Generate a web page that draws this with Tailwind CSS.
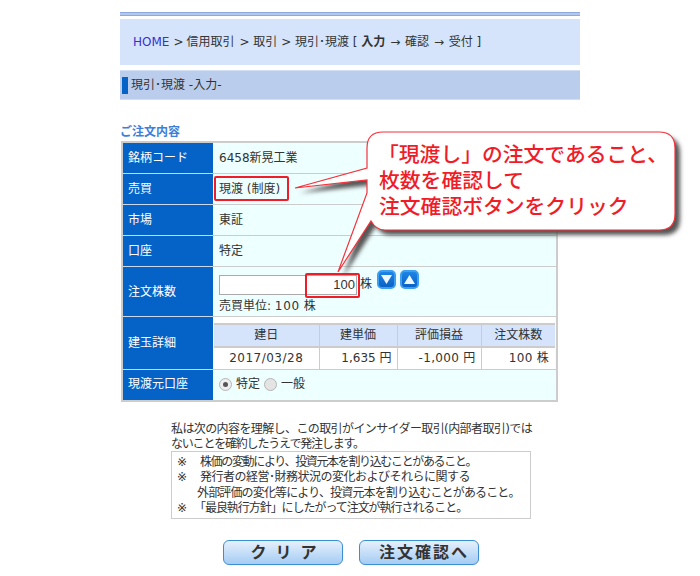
<!DOCTYPE html>
<html lang="ja">
<head>
  <meta charset="UTF-8">
  <title>現引・現渡 -入力-</title>
  <script src="https://cdn.jsdelivr.net/npm/@tailwindcss/browser@4"></script>
</head>
<body class="bg-white font-['DejaVu_Sans','Noto_Sans_CJK_JP',sans-serif] text-[12px] leading-[15px] text-[#333]">
  <div class="relative w-[700px] h-[576px] overflow-hidden">
    <div class="w-[460px] mx-auto pt-[12px]">
      <!-- top rule -->
      <div class="h-[4px] bg-[#b3c8ec] border-y border-[#8eaadc]"></div>

      <!-- breadcrumb -->
      <div class="mt-[3px] h-[46px] bg-[#d5e4fb] pl-[13px] flex items-center whitespace-nowrap">
        <span class="text-[#3333cc]">HOME</span>
        <span class="ml-[4px]">&gt;</span>
        <span class="ml-[3px]">信用取引</span>
        <span class="ml-[5px]">&gt; 取引 &gt; 現引･現渡 [ <b>入力</b> <span class="mx-[1px]">→</span> 確認 <span class="mx-[1px]">→</span> 受付 ]</span>
      </div>

      <!-- page heading -->
      <div class="mt-[5px] h-[30px] bg-[#bbcdec] border-y border-[#d3dff2] flex items-center pl-[2px]">
        <div class="w-[6px] h-[17px] bg-[#0563c8]"></div>
        <span class="ml-[3px]">現引･現渡 -入力-</span>
      </div>

      <h2 class="mt-[25px] h-[15px] font-bold text-[#3d7fd9]">ご注文内容</h2>

      <!-- order table -->
      <table class="ml-[1px] mt-[1px] w-[437px] border-collapse border-2 border-[#cccccc] bg-[#eeffff] table-fixed">
        <colgroup><col class="w-[91px]"><col></colgroup>
        <tbody>
          <tr class="h-[31px] border-b border-[#cccccc]">
            <th class="bg-[#0563c8] text-white font-normal text-left pl-[5px] pt-[2px] border-b border-[#c9d9ee]">銘柄コード</th>
            <td class="pl-[6px] pt-[2px]">6458新晃工業</td>
          </tr>
          <tr class="h-[31px] border-b border-[#cccccc]">
            <th class="bg-[#0563c8] text-white font-normal text-left pl-[5px] pt-[2px] border-b border-[#c9d9ee]">売買</th>
            <td class="pl-[6px] pt-[2px]">現渡 (制度)</td>
          </tr>
          <tr class="h-[31px] border-b border-[#cccccc]">
            <th class="bg-[#0563c8] text-white font-normal text-left pl-[5px] pt-[2px] border-b border-[#c9d9ee]">市場</th>
            <td class="pl-[6px] pt-[2px]">東証</td>
          </tr>
          <tr class="h-[31px] border-b border-[#cccccc]">
            <th class="bg-[#0563c8] text-white font-normal text-left pl-[5px] pt-[2px] border-b border-[#c9d9ee]">口座</th>
            <td class="pl-[6px] pt-[2px]">特定</td>
          </tr>
          <tr class="h-[50px] border-b border-[#cccccc]">
            <th class="bg-[#0563c8] text-white font-normal text-left pl-[5px] pt-[2px] border-b border-[#c9d9ee]">注文株数</th>
            <td class="pl-[6px] align-top">
              <div class="flex items-start mt-[3px] h-[25px]">
                <div class="mt-[5px] w-[138px] h-[20px] border border-[#aaaaaa] bg-white text-right pr-[1px] leading-[18px] font-['Liberation_Sans',sans-serif] text-[13px]">100</div>
                <span class="ml-[3px] mt-[7px]">株</span>
                <!-- spin buttons -->
                <button class="ml-[5px] w-[19px] h-[19px] rounded-[5px] border-2 border-[#3c9ff0] bg-gradient-to-b from-[#1d84e6] to-[#0a62c4] flex items-center justify-center">
                  <svg width="11" height="9" viewBox="0 0 11 9"><path d="M0 0H11L5.5 9Z" fill="#eef6ff"/></svg>
                </button>
                <button class="ml-[4px] w-[19px] h-[19px] rounded-[5px] border-2 border-[#3c9ff0] bg-gradient-to-b from-[#1d84e6] to-[#0a62c4] flex items-center justify-center">
                  <svg width="11" height="9" viewBox="0 0 11 9"><path d="M0 9H11L5.5 0Z" fill="#eef6ff"/></svg>
                </button>
              </div>
              <div class="mt-[4px]">売買単位: <span class="tracking-[0.7px]">100</span> 株</div>
            </td>
          </tr>
          <tr class="h-[53px] border-b border-[#cccccc]">
            <th class="bg-[#0563c8] text-white font-normal text-left pl-[5px] pt-[2px] border-b border-[#c9d9ee]">建玉詳細</th>
            <td class="p-0 align-top">
              <div class="ml-[1px] mr-[1px] pt-[6px] bg-white">
                <table class="w-full table-fixed border-collapse bg-white">
                  <colgroup><col class="w-[105px]"><col class="w-[78px]"><col class="w-[84px]"><col></colgroup>
                  <thead>
                    <tr class="h-[23px] bg-[#d5e4fb] border-y-2 border-[#cccccc]">
                      <th class="font-normal pt-[1px] border-r border-[#cccccc]">建日</th>
                      <th class="font-normal pt-[1px] border-r border-[#cccccc]">建単価</th>
                      <th class="font-normal pt-[1px] border-r border-[#cccccc]">評価損益</th>
                      <th class="font-normal pt-[1px]">注文株数</th>
                    </tr>
                  </thead>
                  <tbody>
                    <tr class="h-[22px]">
                      <td class="text-center tracking-[0.5px] border-r border-[#cccccc]">2017/03/28</td>
                      <td class="text-right pr-[5px] border-r border-[#cccccc]">1,635 円</td>
                      <td class="text-right pr-[5px] tracking-[0.3px] border-r border-[#cccccc]">-1,000 円</td>
                      <td class="text-right pr-[6px] tracking-[0.3px]">100 株</td>
                    </tr>
                  </tbody>
                </table>
              </div>
            </td>
          </tr>
          <tr class="h-[32px]">
            <th class="bg-[#0563c8] text-white font-normal text-left pl-[5px]">現渡元口座</th>
            <td class="pl-[6px]">
              <div class="flex items-center">
                <span class="w-[13px] h-[13px] rounded-full border border-[#b5b5b5] bg-[#eeeeee] flex items-center justify-center"><span class="w-[5px] h-[5px] rounded-full bg-[#555555]"></span></span>
                <span class="ml-[4px]">特定</span>
                <span class="ml-[4px] w-[13px] h-[13px] rounded-full border border-[#b5b5b5] bg-[#e4e4e4]"></span>
                <span class="ml-[4px]">一般</span>
              </div>
            </td>
          </tr>
        </tbody>
      </table>

      <!-- insider notice -->
      <div class="ml-[51px] mt-[20px] w-[362px] whitespace-nowrap">
        <p class="leading-[15px] tracking-[-0.6px]">私は次の内容を理解し、この取引がインサイダー取引(内部者取引)では</p>
        <p class="leading-[15px] tracking-[-1.2px]">ないことを確約したうえで発注します。</p>
      </div>
      <div class="ml-[51px] mt-[-1px] w-[360px] h-[68px] border border-[#cccccc] pl-[5px] pt-[3px] whitespace-nowrap leading-[15.3px]">
        <div class="flex"><span class="w-[23px]">※</span><span class="tracking-[-1.35px]">株価の変動により、投資元本を割り込むことがあること。</span></div>
        <div class="flex"><span class="w-[23px]">※</span><span class="tracking-[-0.5px]">発行者の経営･財務状況の変化およびそれらに関する</span></div>
        <div class="pl-[20px] tracking-[-0.85px]">外部評価の変化等により、投資元本を割り込むことがあること。</div>
        <div class="flex"><span class="w-[17px]">※</span><span class="tracking-[-1.05px]">「最良執行方針」にしたがって注文が執行されること。</span></div>
      </div>

      <!-- buttons -->
      <div class="mt-[21px] ml-[2px] flex justify-center gap-[16px]">
        <button class="w-[120px] h-[25px] rounded-[6px] border border-[#3a8fd0] bg-gradient-to-b from-[#e6f0fc] to-[#a5ccf3] font-bold text-[16px] leading-[20px] tracking-[9px] pl-[10px] text-[#333]">クリア</button>
        <button class="w-[120px] h-[25px] rounded-[6px] border border-[#3a8fd0] bg-gradient-to-b from-[#e6f0fc] to-[#a5ccf3] font-bold text-[16px] leading-[20px] tracking-[2px] pl-[10px] text-[#333]">注文確認へ</button>
      </div>
    </div>

    <!-- annotation overlay -->
    <div class="absolute left-[214px] top-[176px] w-[75px] h-[25px] border-2 border-[#f01c28] rounded-[2px]"></div>
    <div class="absolute left-[305px] top-[273px] w-[55px] h-[25px] border-2 border-[#f01c28] rounded-[2px]"></div>
    <svg class="absolute left-0 top-0" width="700" height="576" viewBox="0 0 700 576" fill="none">
      <defs><filter id="sh" x="-20%" y="-20%" width="140%" height="140%"><feGaussianBlur stdDeviation="2"/></filter></defs>
      <path transform="translate(5 5)" d="M295 188L367 168V148Q367 132 383 132H659Q675 132 675 148V214Q675 230 659 230H385Q376 230 371 221L338 272L367 193V180Z" fill="#555" filter="url(#sh)"/>
      <path d="M295 188L367 168V148Q367 132 383 132H659Q675 132 675 148V214Q675 230 659 230H385Q376 230 371 221L338 272L367 193V180Z" fill="#fff" stroke="#f7303a" stroke-width="1.2"/>
    </svg>
    <div class="absolute left-[379px] top-[140px] text-[20.8px] leading-[26px] font-medium text-[#f01c28] font-['Noto_Sans_CJK_JP',sans-serif] whitespace-nowrap">
      <div class="ml-[-1px]">「現渡し」の注文であること、</div>
      <div>枚数を確認して</div>
      <div>注文確認ボタンをクリック</div>
    </div>
  </div>
</body>
</html>
